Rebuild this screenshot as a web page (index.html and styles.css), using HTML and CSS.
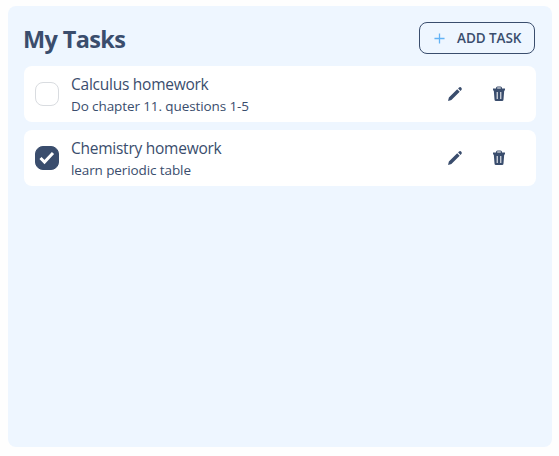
FILE: index.html
```html
<!DOCTYPE html>
<html lang="en">
<head>
<meta charset="utf-8">
<title>My Tasks</title>
<link rel="stylesheet" href="styles.css">
</head>
<body>
<svg class="sprite" aria-hidden="true">
  <symbol id="pencil" viewBox="0 0 16 16"><path d="M1 15l.9-3.400L10.200 3.300l2.500 2.500L4.400 14.100zM11.100 2.500l.9-.9a1.700 1.700 0 0 1 2.400 2.400l-.9.9z"/></symbol>
  <symbol id="trash" viewBox="0 0 14 16"><path fill-rule="evenodd" d="M4 2.500V2a1.500 1.500 0 0 1 1.500-1.500h3A1.500 1.500 0 0 1 10 2v.5h3V4.500H1v-2zM5.200 2.500h3.600V1.600H5.200zM1.800 4.500h10.400l-.7 9a1.500 1.500 0 0 1-1.500 1.500H4a1.500 1.500 0 0 1-1.500-1.500zM4.700 6v7h1V6zM8.300 6v7h1V6z"/></symbol>
</svg>
<main class="panel">
  <header class="header">
    <h1 class="title">My Tasks</h1>
    <button class="add"><svg class="plus" viewBox="0 0 12 12"><path d="M6 .5v11M.5 6h11"/></svg><span>ADD TASK</span></button>
  </header>
  <ul class="list">
    <li class="task">
      <span class="check"></span>
      <div class="text"><p class="name">Calculus homework</p><p class="note">Do chapter 11. questions 1-5</p></div>
      <svg class="icon pencil"><use href="#pencil"/></svg>
      <svg class="icon trash"><use href="#trash"/></svg>
    </li>
    <li class="task">
      <span class="check checked"><svg class="tick" viewBox="0 0 16 14"><path d="M1.500 7l4 4L14 2"/></svg></span>
      <div class="text"><p class="name">Chemistry homework</p><p class="note">learn periodic table</p></div>
      <svg class="icon pencil"><use href="#pencil"/></svg>
      <svg class="icon trash"><use href="#trash"/></svg>
    </li>
  </ul>
</main>
</body>
</html>
```
FILE: styles.css
```css
* { box-sizing: border-box; margin: 0; padding: 0; }
body { background: #fefefe; color: #3a4d6d; font-family: "Open Sans", "Noto Sans", sans-serif; padding: 6px 7px 9px 8px; }
.sprite { display: none; }
.panel { height: 441px; background: #eef6ff; border-radius: 8px; padding: 16px; }
.header { display: flex; justify-content: space-between; align-items: center; height: 32px; margin-bottom: 12px; padding-right: 1px; }
.title { font-size: 23.5px; font-weight: 700; line-height: 32px; letter-spacing: -0.65px; padding-top: 2px; margin-left: -1px; }
.add { display: flex; align-items: center; width: 116px; height: 32px; padding-left: 14px; gap: 12px; border: 1px solid #3a4d6d; border-radius: 8px; background: transparent; color: inherit; font: 600 13.5px/30px "Open Sans", sans-serif; letter-spacing: -0.05px; white-space: nowrap; }
.plus { width: 11px; height: 11px; stroke: #63b3f5; stroke-width: 1.4; fill: none; }
.list { list-style: none; display: grid; gap: 8px; }
.task { display: flex; align-items: center; height: 56px; padding: 0 30px 0 11px; background: #fff; border-radius: 8px; }
.check { width: 24px; height: 24px; border: 1px solid #d9dce0; border-radius: 8px; display: flex; align-items: center; justify-content: center; }
.checked { background: #3a4d6d; border-color: #3a4d6d; }
.tick { width: 16px; height: 14px; fill: none; stroke: #fff; stroke-width: 3; }
.text { flex: 1; margin-left: 12px; }
.name { font-size: 15.5px; line-height: 24px; font-weight: 400; letter-spacing: -0.25px; }
.note { font-size: 13.5px; line-height: 20px; letter-spacing: -0.1px; }
.icon { fill: #3a4d6d; }
.pencil { width: 16px; height: 16px; }
.trash { width: 14px; height: 16px; margin-left: 29px; }
```
